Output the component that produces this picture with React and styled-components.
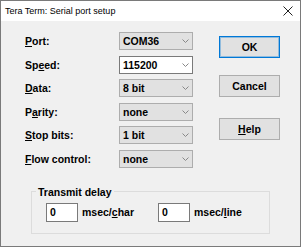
import { Fragment } from "react";
import styled, { createGlobalStyle } from "styled-components";

const GlobalStyle = createGlobalStyle`
  html, body {
    margin: 0;
    padding: 0;
    background: #f0f0f0;
  }
  * {
    box-sizing: border-box;
  }
`;

const Window = styled.div`
  width: 301px;
  height: 247px;
  border: 1px solid #7a7a7a;
  display: flex;
  flex-direction: column;
  background: #f0f0f0;
  font-family: "Liberation Sans", Arial, sans-serif;
  color: #000;
  overflow: hidden;
`;

const TitleBar = styled.div`
  height: 20px;
  flex: none;
  background: #fff;
  display: flex;
  align-items: center;
  justify-content: space-between;
  padding: 0 7px 0 4px;
  font-size: 9px;
`;

const Body = styled.div`
  flex: 1;
  padding: 11px 0 0 24px;
`;

const Top = styled.div`
  display: flex;
  align-items: flex-start;
`;

const Fields = styled.div`
  display: grid;
  grid-template-columns: 94px 74px;
  row-gap: 5.6px;
  align-items: center;
`;

const Label = styled.div`
  font-weight: bold;
  font-size: 10.5px;
`;

const Combo = styled.div`
  height: 18px;
  border: 1px solid ${(p) => (p.$editable ? "#7a7a7a" : "#adadad")};
  background: ${(p) => (p.$editable ? "#fff" : "#e1e1e1")};
  display: flex;
  align-items: center;
  justify-content: space-between;
  padding: 0 3px 0 3px;
  font-weight: bold;
  font-size: 10.5px;
`;

const Buttons = styled.div`
  display: flex;
  flex-direction: column;
  margin: 4px 0 0 26px;
`;

const Button = styled.button`
  width: 61px;
  height: 22px;
  margin: ${(p) => p.$space || 0}px 0 0 0;
  padding: 0;
  border: 1px solid ${(p) => (p.$default ? "#0078d7" : "#adadad")};
  box-shadow: ${(p) => (p.$default ? "inset 0 0 0 1px rgba(0,120,215,0.35)" : "none")};
  background: #e1e1e1;
  font-family: inherit;
  font-weight: bold;
  font-size: 10.5px;
  color: #000;
`;

const GroupBox = styled.fieldset`
  margin: 18px 0 0 6px;
  width: 239px;
  padding: 0;
  border: 1px solid #dcdcdc;
`;

const Legend = styled.legend`
  margin-left: 4px;
  padding: 0 2px;
  font-weight: bold;
  font-size: 10.5px;
  line-height: 12px;
`;

const DelayRow = styled.div`
  display: flex;
  align-items: center;
  padding: 5px 0 11px 14px;
`;

const DelayItem = styled.div`
  display: flex;
  align-items: center;
  flex: none;
  width: ${(p) => p.$width}px;
`;

const NumBox = styled.div`
  width: 32px;
  height: 19px;
  border: 1px solid #7a7a7a;
  background: #fff;
  padding-left: 3px;
  display: flex;
  align-items: center;
  font-weight: bold;
  font-size: 10.5px;
`;

const Unit = styled.span`
  margin-left: 4px;
  font-weight: bold;
  font-size: 10.5px;
`;

const Chevron = () => (
  <svg width="7" height="4" viewBox="0 0 7 4">
    <path d="M0.5 0.5 L3.5 3.5 L6.5 0.5" fill="none" stroke="#888" strokeWidth="1" />
  </svg>
);

const CloseIcon = () => (
  <svg width="10" height="10" viewBox="0 0 10 10">
    <path d="M0.5 0.5 L9.5 9.5 M9.5 0.5 L0.5 9.5" stroke="#222" strokeWidth="1" />
  </svg>
);

const fields = [
  { label: ["", "P", "ort:"], value: "COM36" },
  { label: ["Sp", "e", "ed:"], value: "115200", editable: true },
  { label: ["", "D", "ata:"], value: "8 bit" },
  { label: ["P", "a", "rity:"], value: "none" },
  { label: ["", "S", "top bits:"], value: "1 bit" },
  { label: ["", "F", "low control:"], value: "none" },
];

export default function App() {
  return (
    <>
      <GlobalStyle />
      <Window>
        <TitleBar>
          <span>Tera Term: Serial port setup</span>
          <CloseIcon />
        </TitleBar>
        <Body>
          <Top>
            <Fields>
              {fields.map((f) => (
                <Fragment key={f.label.join("")}>
                  <Label>
                    {f.label[0]}
                    <u>{f.label[1]}</u>
                    {f.label[2]}
                  </Label>
                  <Combo $editable={f.editable}>
                    <span>{f.value}</span>
                    <Chevron />
                  </Combo>
                </Fragment>
              ))}
            </Fields>
            <Buttons>
              <Button $default>OK</Button>
              <Button $space={17}>Cancel</Button>
              <Button $space={21}>
                <u>H</u>elp
              </Button>
            </Buttons>
          </Top>
          <GroupBox>
            <Legend>Transmit delay</Legend>
            <DelayRow>
              <DelayItem $width={112}>
                <NumBox>0</NumBox>
                <Unit>
                  msec/<u>c</u>har
                </Unit>
              </DelayItem>
              <DelayItem $width={100}>
                <NumBox>0</NumBox>
                <Unit>
                  msec/<u>l</u>ine
                </Unit>
              </DelayItem>
            </DelayRow>
          </GroupBox>
        </Body>
      </Window>
    </>
  );
}
